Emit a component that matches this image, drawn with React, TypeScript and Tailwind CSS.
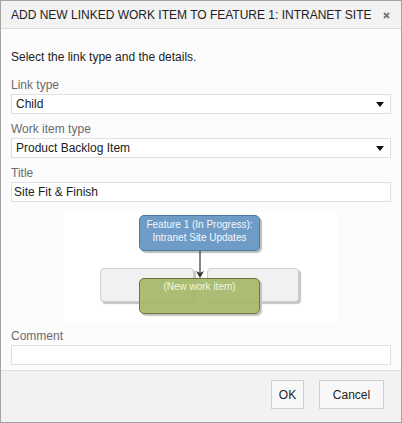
import React from "react";

const font = { fontFamily: '"Liberation Sans", Arial, sans-serif' };

function Caret() {
  return (
    <svg width="8" height="5" viewBox="0 0 8 5" className="shrink-0">
      <path d="M0 0 H8 L4 5 Z" fill="#111" />
    </svg>
  );
}

function Field({ label, children, gap = "mt-[7px]" }: { label: string; children: React.ReactNode; gap?: string }) {
  return (
    <div className={gap}>
      <div className="h-[16px] leading-[16px] text-[12px] text-[#6b6b6b]">{label}</div>
      <div className="mt-[1px]">{children}</div>
    </div>
  );
}

function Select({ value }: { value: string }) {
  return (
    <div className="h-[20px] bg-white border border-[#e0e0e0] flex items-center justify-between pl-[4px] pr-[6px] text-[12px] text-[#222]">
      <span>{value}</span>
      <Caret />
    </div>
  );
}

function Input({ value }: { value?: string }) {
  return (
    <div className="h-[20px] bg-white border border-[#e0e0e0] flex items-center pl-[2px] text-[12px] text-[#222]">
      {value}
    </div>
  );
}

function Diagram() {
  return (
    <div className="relative mx-auto mt-[10px] w-[274px] h-[110px] bg-white text-[10px] leading-[13px]">
      <div className="absolute left-[36px] top-[56px] w-[94px] h-[34px] rounded-[4px] bg-[#f1f1f1] border border-[#cfcfcf] shadow-[2px_2px_1px_#c4c4c4]" />
      <div className="absolute left-[143px] top-[56px] w-[92px] h-[34px] rounded-[4px] bg-[#f1f1f1] border border-[#cfcfcf] shadow-[2px_2px_1px_#c4c4c4]" />
      <div className="absolute left-[75px] top-[3px] w-[121px] h-[36px] rounded-[5px] bg-[#6f9bc7] border border-[#4d79a8] shadow-[2px_2px_1px_#bdbdbd] text-center text-[#f4f8fc] pt-[2px]">
        Feature 1 (In Progress):
        <br />
        Intranet Site Updates
      </div>
      <svg className="absolute left-[131px] top-[39px]" width="10" height="28" viewBox="0 0 10 28">
        <line x1="5" y1="0" x2="5" y2="22" stroke="#333" strokeWidth="1.2" />
        <path d="M1 20 L5 27 L9 20 L5 22 Z" fill="#333" />
      </svg>
      <div className="absolute left-[75px] top-[66px] w-[121px] h-[36px] rounded-[5px] bg-[#a3b766]/90 border border-[#66783a] shadow-[2px_2px_1px_#c4c4c4] text-center text-[#f3f5de] pt-[1px]">
        (New work item)
      </div>
    </div>
  );
}

export default function App() {
  return (
    <div style={font} className="w-[402px] h-[423px] border border-[#a3a3a3] bg-[#fcfcfc] flex flex-col">
      <div className="h-[28px] shrink-0 bg-[#f2f2f2] border-b border-[#dcdcdc] flex items-center justify-between pl-[10px] pr-[11px]">
        <span className="whitespace-nowrap text-[12px] text-[#222]">ADD NEW LINKED WORK ITEM TO FEATURE 1: INTRANET SITE</span>
        <svg width="7" height="7" viewBox="0 0 7 7" className="shrink-0 mt-[2px]">
          <path d="M1 1 L6 6 M6 1 L1 6" stroke="#777" strokeWidth="1.8" />
        </svg>
      </div>

      <div className="flex-1 px-[10px] pt-[20px]">
        <div className="h-[16px] leading-[16px] text-[12px] text-[#222]">Select the link type and the details.</div>
        <Field label="Link type" gap="mt-[12px]">
          <Select value="Child" />
        </Field>
        <Field label="Work item type">
          <Select value="Product Backlog Item" />
        </Field>
        <Field label="Title">
          <Input value="Site Fit & Finish" />
        </Field>
        <Diagram />
        <Field label="Comment" gap="mt-[6px]">
          <Input />
        </Field>
      </div>

      <div className="h-[52px] shrink-0 bg-[#f2f2f2] border-t border-[#dcdcdc] flex items-start justify-end gap-[15px] pt-[9px] pr-[17px]">
        <button className="h-[29px] w-[33px] bg-[#f8f8f8] border border-[#cfcfcf] text-[12px] text-[#222]">OK</button>
        <button className="h-[29px] w-[65px] bg-[#f8f8f8] border border-[#cfcfcf] text-[12px] text-[#222]">Cancel</button>
      </div>
    </div>
  );
}
